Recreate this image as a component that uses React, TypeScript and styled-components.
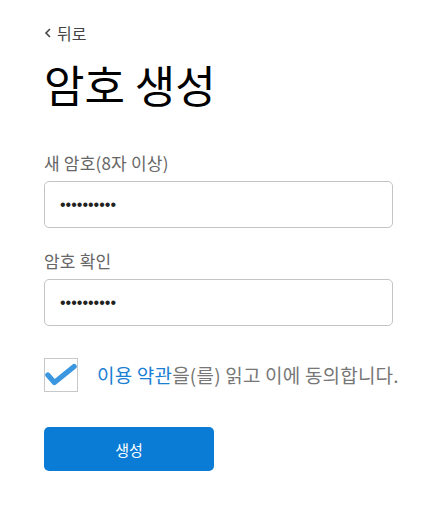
import React from 'react';
import styled, { createGlobalStyle } from 'styled-components';

const GlobalStyle = createGlobalStyle`
  html, body {
    margin: 0;
    padding: 0;
    background: #fff;
  }
  body {
    font-family: "Noto Sans CJK KR", "Noto Sans", sans-serif;
  }
`;

const Page = styled.div`
  display: flex;
  flex-direction: column;
  padding: 22px 0 0 44px;
  width: 349px;
`;

const BackLink = styled.a`
  display: flex;
  align-items: center;
  gap: 5px;
  font-size: 16px;
  line-height: 22px;
  color: #444;
  text-decoration: none;
  cursor: pointer;
`;

const Title = styled.h1`
  margin: 10px 0 0;
  font-size: 44px;
  line-height: 60px;
  font-weight: 400;
  color: #000;
`;

const Field = styled.label<{ $top: number }>`
  display: flex;
  flex-direction: column;
  gap: 7px;
  margin-top: ${p => p.$top}px;
`;

const Label = styled.span`
  font-size: 17px;
  line-height: 22px;
  color: #666;
  letter-spacing: 0.2px;
`;

const Input = styled.input`
  box-sizing: border-box;
  width: 100%;
  height: 47px;
  border: 1px solid #c4c4c4;
  border-radius: 5px;
  padding: 0 15px;
  font-size: 16px;
  color: #222;
  outline: none;
  font-family: "Liberation Sans", sans-serif;
`;

const AgreeRow = styled.div`
  display: flex;
  align-items: center;
  gap: 19px;
  margin-top: 32px;
`;

const CheckBox = styled.span`
  box-sizing: border-box;
  display: flex;
  align-items: center;
  justify-content: center;
  width: 34px;
  height: 34px;
  border: 1px solid #c8c8c8;
  flex-shrink: 0;
`;

const AgreeText = styled.span`
  font-size: 19px;
  line-height: 24px;
  color: #777;
  letter-spacing: 0.2px;
  white-space: nowrap;
`;

const TermsLink = styled.a`
  color: #1a80d4;
  text-decoration: none;
`;

const SubmitButton = styled.button`
  margin-top: 35px;
  width: 170px;
  height: 44px;
  border: none;
  border-radius: 5px;
  background: #0a7cd6;
  color: #fff;
  font-size: 15px;
  font-family: inherit;
  cursor: pointer;
`;

export default function App() {
  return (
    <>
      <GlobalStyle />
      <Page>
        <BackLink>
          <svg width="8" height="12" viewBox="0 0 8 12">
            <path d="M6 2 L2 6 L6 10" fill="none" stroke="#444" strokeWidth="1.6" />
          </svg>
          뒤로
        </BackLink>
        <Title>암호 생성</Title>
        <Field $top={38}>
          <Label>새 암호(8자 이상)</Label>
          <Input type="password" defaultValue="abcdefghij" />
        </Field>
        <Field $top={22}>
          <Label>암호 확인</Label>
          <Input type="password" defaultValue="abcdefghij" />
        </Field>
        <AgreeRow>
          <CheckBox>
            <svg width="34" height="34" viewBox="0 0 34 34">
              <path d="M3 17 L10 25 L31 8" fill="none" stroke="#3a97e0" strokeWidth="5.5" strokeLinecap="round" strokeLinejoin="round" />
            </svg>
          </CheckBox>
          <AgreeText>
            <TermsLink>이용 약관</TermsLink>을(를) 읽고 이에 동의합니다.
          </AgreeText>
        </AgreeRow>
        <SubmitButton>생성</SubmitButton>
      </Page>
    </>
  );
}
